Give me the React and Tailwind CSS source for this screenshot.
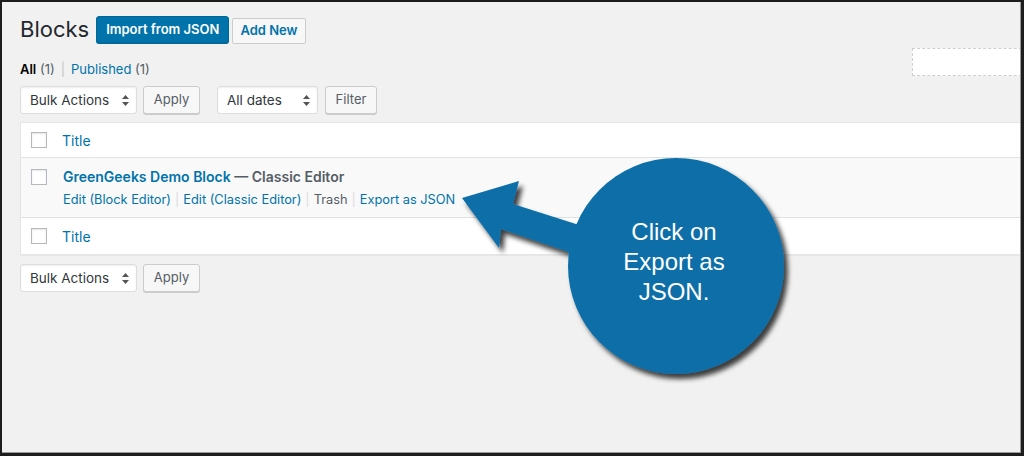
import React from 'react';

const ui = { fontFamily: 'Inter, "Noto Sans", sans-serif' };

const SelectBox = ({ label, width }) => (
    <div
        className={`h-[28px] ${width} flex items-center justify-between pl-[9px] pr-[7px] bg-white border border-[#dddddd] rounded-[3px] shadow-[inset_0_1px_2px_rgba(0,0,0,0.07)] text-[13.5px] text-[#32373c]`}
    >
        <span>{label}</span>
        <svg width="7" height="11" viewBox="0 0 7 11">
            <path d="M3.5 0 L7 4 H0 Z M0 7 H7 L3.5 11 Z" fill="#555" />
        </svg>
    </div>
);

const PlainButton = ({ children, width }) => (
    <div
        className={`h-[28px] ${width} flex items-center justify-center bg-[#f7f7f7] border border-[#cccccc] rounded-[3px] shadow-[0_1px_0_#cccccc] text-[13px] text-[#555d66]`}
    >
        {children}
    </div>
);

const Checkbox = () => (
    <div className="w-[16px] h-[16px] bg-white border border-[#b4b9be] shadow-[inset_0_1px_2px_rgba(0,0,0,0.1)] shrink-0" />
);

const Sep = () => <span className="text-[#dddddd] px-[4px]">|</span>;

export default function App() {
    return (
        <div className="relative w-[1024px] h-[456px] overflow-hidden bg-[#1d1d1d]" style={ui}>
            <div className="absolute inset-0 border-t-2 border-l-2 border-r-[3px] border-b-[3px] border-[#1d1d1d]">
                <div className="w-full h-full bg-[#f1f1f1] border-r border-b border-[#9a9a9a] pl-[18px] pt-[13px] overflow-hidden">
                    {/* heading */}
                    <div className="flex items-center h-[29px]">
                        <h1 className="text-[22px] leading-[29px] text-[#23282d] font-normal">Blocks</h1>
                        <div className="ml-[7px] h-[27px] px-[9px] flex items-center bg-[#0073aa] border border-[#006799] rounded-[3px] shadow-[0_1px_0_#006799] text-white text-[13px] font-semibold">
                            Import from JSON
                        </div>
                        <div className="ml-[3px] mt-[3px] h-[26px] px-[7px] flex items-center bg-[#f7f7f7] border border-[#cccccc] rounded-[2px] text-[#0073aa] text-[13px] font-semibold">
                            Add New
                        </div>
                    </div>

                    {/* views + search */}
                    <div className="flex items-start mt-[4px] h-[38px]">
                        <div className="text-[13px] leading-[20px] mt-[11px] text-[#555d66]">
                            <span className="text-[#000] font-semibold">All</span> (1)
                            <span className="text-[#c4c4c4] px-[6px]">|</span>
                            <span className="text-[#0073aa]">Published</span> (1)
                        </div>
                        <div className="ml-auto mr-[-12px] w-[120px] h-[28px] bg-white border border-dashed border-[#cfcfcf]" />
                    </div>

                    {/* filters */}
                    <div className="flex items-center">
                        <SelectBox label="Bulk Actions" width="w-[117px]" />
                        <div className="ml-[6px]">
                            <PlainButton width="w-[57px]">Apply</PlainButton>
                        </div>
                        <div className="ml-[17px]">
                            <SelectBox label="All dates" width="w-[101px]" />
                        </div>
                        <div className="ml-[7px]">
                            <PlainButton width="w-[52px]">Filter</PlainButton>
                        </div>
                    </div>

                    {/* table */}
                    <div className="mt-[8px] mr-[-4px] bg-white border border-[#e5e5e5] shadow-[0_1px_1px_rgba(0,0,0,0.04)]">
                        <div className="h-[35px] flex items-center pl-[10px] border-b border-[#e1e1e1]">
                            <Checkbox />
                            <span className="ml-[15px] text-[14px] text-[#0073aa]">Title</span>
                        </div>
                        <div className="h-[60px] flex items-start pl-[10px] pt-[11px] bg-[#f9f9f9] border-b border-[#e1e1e1]">
                            <Checkbox />
                            <div className="ml-[16px] mt-[-2px]">
                                <div className="text-[14px] leading-[20px] font-semibold">
                                    <span className="text-[#0073aa]">GreenGeeks Demo Block</span>
                                    <span className="text-[#555d66]"> — Classic Editor</span>
                                </div>
                                <div className="mt-[3px] text-[12.8px] leading-[20px]">
                                    <span className="text-[#0073aa]">Edit (Block Editor)</span>
                                    <Sep />
                                    <span className="text-[#0073aa]">Edit (Classic Editor)</span>
                                    <Sep />
                                    <span className="text-[#555d66]">Trash</span>
                                    <Sep />
                                    <span className="text-[#0073aa]">Export as JSON</span>
                                </div>
                            </div>
                        </div>
                        <div className="h-[36px] flex items-center pl-[10px]">
                            <Checkbox />
                            <span className="ml-[15px] text-[14px] text-[#0073aa]">Title</span>
                        </div>
                    </div>

                    {/* bottom actions */}
                    <div className="flex items-center mt-[9px]">
                        <SelectBox label="Bulk Actions" width="w-[117px]" />
                        <div className="ml-[6px]">
                            <PlainButton width="w-[57px]">Apply</PlainButton>
                        </div>
                    </div>
                </div>
            </div>

            {/* callout */}
            <svg className="absolute left-0 top-0" width="1024" height="456" viewBox="0 0 1024 456">
                <defs>
                    <filter id="sh" x="-20%" y="-20%" width="140%" height="140%">
                        <feDropShadow dx="4" dy="5" stdDeviation="2.5" floodColor="#000" floodOpacity="0.75" />
                    </filter>
                </defs>
                <g filter="url(#sh)" fill="#0b6ea8">
                    <polygon points="462,198 519,181 513,204 620,238 610,266 501,229 499,248" />
                    <circle cx="676" cy="266" r="108" />
                </g>
            </svg>
            <div
                className="absolute left-[566px] top-[217px] w-[216px] text-center text-white text-[24px] leading-[30px]"
                style={{ fontFamily: '"Liberation Sans", Arial, sans-serif' }}
            >
                Click on
                <br />
                Export as
                <br />
                JSON.
            </div>
        </div>
    );
}
